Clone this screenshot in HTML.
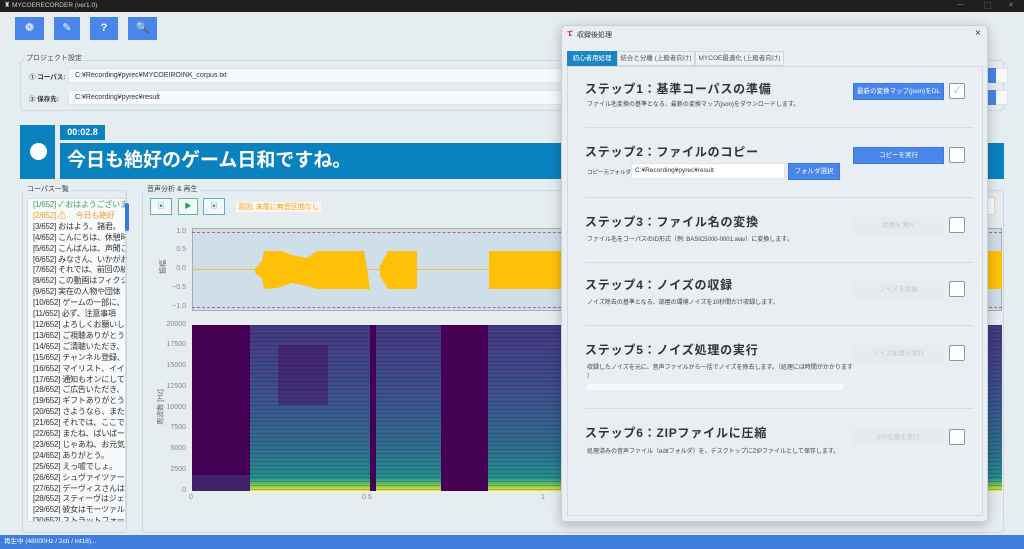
<!DOCTYPE html>
<html><head><meta charset="utf-8"><style>
*{margin:0;padding:0;box-sizing:border-box}
body{width:1024px;height:549px;overflow:hidden;background:#e6edf1;font-family:"Liberation Sans","Noto Sans CJK JP",sans-serif;position:relative;color:#333}
.a{position:absolute}
.tb{background:#4a86e8;color:#fff;font-size:11px;text-align:center;line-height:23px}
.grp{border:1px solid #cfd8de;border-radius:3px}
.gl{font-size:7px;color:#444;background:#e6edf1;padding:0 2px}
.inp{background:#f7f9fa;border:1px solid #dde3e7;font-size:7px;color:#333;padding-left:6px;line-height:14px}
.li{font-size:8px;line-height:10.9px;white-space:nowrap;color:#333;letter-spacing:-0.2px}
.tick{font-size:7px;color:#888;text-align:right;width:30px}
.st{font-size:12px;font-weight:bold;color:#333;letter-spacing:0.8px}
.sd{font-size:6px;color:#444}
.btn{background:#4a86e8;color:#fff;font-size:6.5px;text-align:center;border:1px solid #3b78dc}
.btnd{background:#e8ebed;color:#c4c8cc;font-size:6.5px;text-align:center}
.cb{width:16px;height:16px;background:#fff;border:1.5px solid #8f959a;border-radius:2px}
.sep{height:1px;background:#d4dbe0;left:585px;width:388px}
</style></head><body>
<div class="a" style="left:0;top:0;width:1024px;height:12px;background:#1f1f1f"></div>
<div class="a" style="left:4px;top:1px;font-size:7px;color:#ddd">♜</div>
<div class="a" style="left:12px;top:2px;font-size:6.5px;color:#ccc">MYCOERECORDER (ver1.0)</div>
<div class="a" style="left:957px;top:1px;font-size:7px;color:#888">—</div>
<div class="a" style="left:984px;top:1px;font-size:7px;color:#888">▢</div>
<div class="a" style="left:1008px;top:1px;font-size:7px;color:#888">✕</div>

<div class="a tb" style="left:15px;top:17px;width:29px;height:23px">❁</div>
<div class="a tb" style="left:54px;top:17px;width:26px;height:23px">✎</div>
<div class="a tb" style="left:90px;top:17px;width:28px;height:23px;font-weight:bold">?</div>
<div class="a tb" style="left:128px;top:17px;width:29px;height:23px">🔍</div>

<div class="a grp" style="left:20px;top:60px;width:984px;height:51px"></div>
<div class="a gl" style="left:24px;top:53px">プロジェクト設定</div>
<div class="a" style="left:29px;top:71px;font-size:6.5px;font-weight:bold">① コーパス:</div>
<div class="a" style="left:29px;top:93px;font-size:6.5px;font-weight:bold">② 保存先:</div>
<div class="a inp" style="left:68px;top:68px;width:940px;height:15px">C:¥Recording¥pyrec¥MYCOEIROINK_corpus.txt</div>
<div class="a inp" style="left:68px;top:90px;width:940px;height:15px">C:¥Recording¥pyrec¥result</div>
<div class="a" style="left:985px;top:68px;width:11px;height:15px;background:#4a86e8"></div>
<div class="a" style="left:985px;top:90px;width:11px;height:15px;background:#4a86e8"></div>

<div class="a" style="left:20px;top:125px;width:35px;height:54px;background:#0a82bf"></div>
<div class="a" style="left:30px;top:143px;width:17px;height:17px;border-radius:50%;background:#fff"></div>
<div class="a" style="left:60px;top:125px;width:45px;height:15px;background:#0a82bf;color:#fff;font-size:9px;font-weight:bold;line-height:15px;text-align:center">00:02.8</div>
<div class="a" style="left:60px;top:143px;width:944px;height:36px;background:#0a82bf;color:#fff;font-size:19px;font-weight:bold;line-height:36px;padding-left:7px">今日も絶好のゲーム日和ですね。</div>

<div class="a grp" style="left:22px;top:190px;width:105px;height:343px"></div>
<div class="a gl" style="left:25px;top:184px">コーパス一覧</div>
<div class="a" style="left:27px;top:198px;width:99px;height:324px;background:#f7f9fa;border:1px solid #d5dbe0;overflow:hidden;padding:1px 0 0 5px">
<div class="li" style="color:#3a9c6a">[1/652] ✓ おはようございま</div>
<div class="li" style="color:#f0a020">[2/652] ⚠　 今日も絶好</div>
<div class="li">[3/652] おはよう、諸君。</div>
<div class="li">[4/652] こんにちは、休憩時</div>
<div class="li">[5/652] こんばんは、声聞こ</div>
<div class="li">[6/652] みなさん、いかがお</div>
<div class="li">[7/652] それでは、前回の続</div>
<div class="li">[8/652] この動画はフィクシ</div>
<div class="li">[9/652] 実在の人物や団体</div>
<div class="li">[10/652] ゲームの一部に、</div>
<div class="li">[11/652] 必ず、注意事項</div>
<div class="li">[12/652] よろしくお願いしま</div>
<div class="li">[13/652] ご視聴ありがとうご</div>
<div class="li">[14/652] ご清聴いただき、</div>
<div class="li">[15/652] チャンネル登録、</div>
<div class="li">[16/652] マイリスト、イイネ</div>
<div class="li">[17/652] 通知もオンにして</div>
<div class="li">[18/652] ご広告いただき、</div>
<div class="li">[19/652] ギフトありがとうご</div>
<div class="li">[20/652] さようなら、またお</div>
<div class="li">[21/652] それでは、ここで終</div>
<div class="li">[22/652] またね、ばいばーい</div>
<div class="li">[23/652] じゃあね、お元気</div>
<div class="li">[24/652] ありがとう。</div>
<div class="li">[25/652] えっ嘘でしょ。</div>
<div class="li">[26/652] シュヴァイツァーは</div>
<div class="li">[27/652] デーヴィスさんはと</div>
<div class="li">[28/652] スティーヴはジェー</div>
<div class="li">[29/652] 彼女はモーツァル</div>
<div class="li">[30/652] ストラットフォード</div>
</div>
<div class="a" style="left:125px;top:203px;width:4px;height:28px;background:#3b78dc;border-radius:2px"></div>

<div class="a grp" style="left:142px;top:190px;width:862px;height:343px"></div>
<div class="a gl" style="left:145px;top:184px">音声分析 &amp; 再生</div>
<div class="a" style="left:150px;top:198px;width:22px;height:17px;border:1px solid #5bb0c0;background:#f4f8f9;font-size:7px;color:#3a8fb0;text-align:center;line-height:15px">▣</div>
<div class="a" style="left:178px;top:198px;width:20px;height:17px;border:1px solid #5bc08a;background:#f4f8f9;font-size:7px;color:#1a9a50;text-align:center;line-height:15px">▶</div>
<div class="a" style="left:203px;top:198px;width:22px;height:17px;border:1px solid #5bb0c0;background:#f4f8f9;font-size:7px;color:#3a8fb0;text-align:center;line-height:15px">▣</div>
<div class="a" style="left:236px;top:202px;background:#fff8ea;color:#f0a030;font-size:7px;padding:0 2px">原因: 末尾に無音区間なし</div>
<div class="a" style="left:985px;top:197px;width:10px;height:18px;border:1px solid #f0d8a8;background:#fff"></div>

<div class="a" style="left:192px;top:228px;width:810px;height:83px;background:#cfdfea;border:1px solid #aab"></div>
<div class="a" style="left:192px;top:232px;width:810px;border-top:1px dashed #c06080"></div>
<div class="a" style="left:192px;top:307px;width:810px;border-top:1px dashed #c06080"></div>
<div class="a" style="left:192px;top:269px;width:810px;height:1px;background:#f5c030"></div>
<svg class="a" style="left:192px;top:228px" width="810" height="83">
<g fill="#ffc107">
<path d="M63 41 L70 33 L72 23 L90 23 L100 27 L115 30 L125 23 L172 23 L175 40 L178 62 L172 61 L125 61 L115 58 L100 55 L85 60 L72 61 L70 50 L63 45Z"/>
<path d="M188 38 L196 23 L225 23 L225 61 L196 61 L188 48Z"/>
<path d="M297 23 L810 23 L810 61 L297 61Z"/>
</g></svg>
<div class="a tick" style="left:156px;top:228px">1.0</div>
<div class="a tick" style="left:156px;top:246px">0.5</div>
<div class="a tick" style="left:156px;top:265px">0.0</div>
<div class="a tick" style="left:156px;top:284px">−0.5</div>
<div class="a tick" style="left:156px;top:303px">−1.0</div>
<div class="a" style="left:156px;top:262px;font-size:7px;color:#666;transform:rotate(-90deg)">振幅</div>

<svg class="a" style="left:192px;top:325px" width="810" height="166">
<defs>
<linearGradient id="g" x1="0" y1="0" x2="0" y2="1">
<stop offset="0" stop-color="#433a80"/><stop offset="0.4" stop-color="#3b528b"/><stop offset="0.75" stop-color="#2c728e"/><stop offset="0.92" stop-color="#21918c"/><stop offset="0.97" stop-color="#7ad151"/><stop offset="1" stop-color="#fde725"/>
</linearGradient>
<pattern id="h" width="4" height="4" patternUnits="userSpaceOnUse"><rect width="4" height="1" fill="#440154" opacity="0.25"/></pattern>
</defs>
<rect width="810" height="166" fill="#440154"/>
<rect x="58" y="0" width="120" height="166" fill="url(#g)"/>
<rect x="86" y="20" width="50" height="60" fill="#440154" opacity="0.4"/>
<rect x="184" y="0" width="65" height="166" fill="url(#g)"/>
<rect x="296" y="0" width="514" height="166" fill="url(#g)"/>
<rect width="810" height="166" fill="url(#h)"/>
<rect x="0" y="150" width="58" height="16" fill="#3b528b" opacity="0.4"/>
</svg>
<div class="a tick" style="left:156px;top:321px">20000</div>
<div class="a tick" style="left:156px;top:341px">17500</div>
<div class="a tick" style="left:156px;top:362px">15000</div>
<div class="a tick" style="left:156px;top:383px">12500</div>
<div class="a tick" style="left:156px;top:404px">10000</div>
<div class="a tick" style="left:156px;top:424px">7500</div>
<div class="a tick" style="left:156px;top:445px">5000</div>
<div class="a tick" style="left:156px;top:466px">2500</div>
<div class="a tick" style="left:156px;top:487px">0</div>
<div class="a" style="left:143px;top:402px;font-size:7px;color:#666;transform:rotate(-90deg)">周波数 [Hz]</div>
<div class="a" style="left:189px;top:494px;font-size:7px;color:#888">0</div>
<div class="a" style="left:362px;top:494px;font-size:7px;color:#888">0.5</div>
<div class="a" style="left:541px;top:494px;font-size:7px;color:#888">1</div>

<div class="a" style="left:0;top:535px;width:1024px;height:14px;background:#3f7fe0;color:#fff;font-size:6.5px;line-height:14px;padding-left:4px">再生中 (48000Hz / 2ch / int16)...</div>

<div class="a" style="left:561px;top:25px;width:427px;height:497px;background:#e8eef2;border:1px solid #c8d0d6;border-radius:4px;box-shadow:0 3px 12px rgba(0,0,0,.25)"></div>
<div class="a" style="left:567px;top:29px;font-size:8px;color:#d03030;font-weight:bold">ፔ</div>
<div class="a" style="left:577px;top:30px;font-size:7px;color:#333">収録後処理</div>
<div class="a" style="left:975px;top:28px;font-size:10px;color:#333">×</div>
<div class="a" style="left:567px;top:51px;width:50px;height:15px;background:#1a86c4;color:#fff;font-size:6.5px;line-height:15px;text-align:center">初心者用処理</div>
<div class="a" style="left:617px;top:51px;width:78px;height:15px;border:1px solid #d0d6da;background:#edf1f3;font-size:6.5px;line-height:13px;text-align:center;color:#555">結合と分離 (上級者向け)</div>
<div class="a" style="left:695px;top:51px;width:89px;height:15px;border:1px solid #d0d6da;background:#edf1f3;font-size:6.5px;line-height:13px;text-align:center;color:#555">MYCOE最適化 (上級者向け)</div>
<div class="a" style="left:567px;top:66px;width:416px;height:450px;border:1px solid #d4dbe0;background:#e9eef2"></div>

<div class="a st" style="left:585px;top:80px">ステップ1：基準コーパスの準備</div>
<div class="a sd" style="left:587px;top:99px">ファイル名変換の基準となる、最新の変換マップ(json)をダウンロードします。</div>
<div class="a btn" style="left:853px;top:83px;width:91px;height:17px;line-height:15px">最新の変換マップ(json)をDL</div>
<div class="a cb" style="left:949px;top:83px;color:#aaa;font-size:9px;text-align:center;line-height:13px">✓</div>
<div class="a sep" style="top:127px"></div>

<div class="a st" style="left:585px;top:143px">ステップ2：ファイルのコピー</div>
<div class="a" style="left:587px;top:168px;font-size:5.5px;color:#444">コピー元フォルダ:</div>
<div class="a" style="left:631px;top:163px;width:154px;height:16px;background:#fff;border:1px solid #dde3e7;font-size:6.5px;line-height:14px;padding-left:3px">C:¥Recording¥pyrec¥result</div>
<div class="a btn" style="left:788px;top:163px;width:52px;height:17px;line-height:15px">フォルダ選択</div>
<div class="a btn" style="left:853px;top:147px;width:91px;height:17px;line-height:15px">コピーを実行</div>
<div class="a cb" style="left:949px;top:147px"></div>
<div class="a sep" style="top:197px"></div>

<div class="a st" style="left:585px;top:213px">ステップ3：ファイル名の変換</div>
<div class="a sd" style="left:587px;top:234px">ファイル名をコーパスのID形式（例: BASIC5000-0001.wav）に変換します。</div>
<div class="a btnd" style="left:853px;top:217px;width:91px;height:17px;line-height:17px">変換を実行</div>
<div class="a cb" style="left:949px;top:217px"></div>
<div class="a sep" style="top:262px"></div>

<div class="a st" style="left:585px;top:276px">ステップ4：ノイズの収録</div>
<div class="a sd" style="left:587px;top:297px">ノイズ除去の基準となる、部屋の環境ノイズを10秒間だけ収録します。</div>
<div class="a btnd" style="left:853px;top:281px;width:91px;height:17px;line-height:17px">ノイズを収録</div>
<div class="a cb" style="left:949px;top:281px"></div>
<div class="a sep" style="top:325px"></div>

<div class="a st" style="left:585px;top:341px">ステップ5：ノイズ処理の実行</div>
<div class="a sd" style="left:587px;top:362px">収録したノイズを元に、音声ファイルから一括でノイズを除去します。（処理には時間がかかります<br>）</div>
<div class="a" style="left:586px;top:384px;width:257px;height:6px;background:#f6f8f9"></div>
<div class="a btnd" style="left:853px;top:345px;width:91px;height:17px;line-height:17px">ノイズ処理を実行</div>
<div class="a cb" style="left:949px;top:345px"></div>
<div class="a sep" style="top:408px"></div>

<div class="a st" style="left:585px;top:424px">ステップ6：ZIPファイルに圧縮</div>
<div class="a sd" style="left:587px;top:446px">処理済みの音声ファイル（editフォルダ）を、デスクトップにZIPファイルとして保存します。</div>
<div class="a btnd" style="left:853px;top:429px;width:91px;height:17px;line-height:17px">ZIP圧縮を実行</div>
<div class="a cb" style="left:949px;top:429px"></div>
</body></html>
